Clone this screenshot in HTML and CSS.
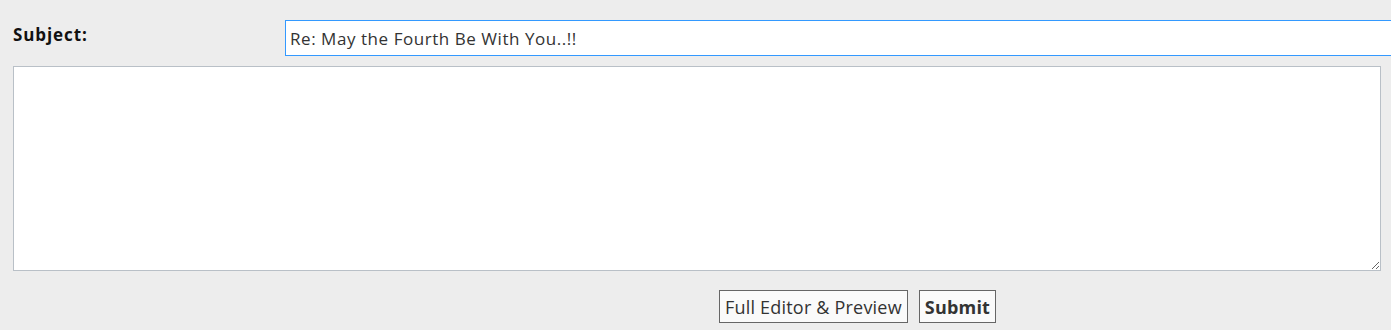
FILE: index.html
```html
<!DOCTYPE html>
<html lang="en">
<head>
    <meta charset="UTF-8">
    <title>Quick Reply</title>
    <link rel="stylesheet" href="styles.css">
</head>
<body>
    <form class="reply-form" autocomplete="off">
        <div class="subject-row">
            <label for="subject" class="subject-label">Subject:</label>
            <div class="field-col">
                <input type="text" id="subject" class="subject-input" value="Re: May the Fourth Be With You..!!">
            </div>
        </div>
        <textarea class="message-box" id="message"></textarea>
        <div class="button-row">
            <div class="spacer"></div>
            <div class="field-col buttons">
                <button type="button" class="btn">Full Editor &amp; Preview</button>
                <button type="submit" class="btn btn-submit">Submit</button>
            </div>
        </div>
    </form>
</body>
</html>
```

FILE: styles.css
```css
html, body {
    margin: 0;
    padding: 0;
    background: #ededed;
    overflow: hidden;
}

body {
    font-family: "Open Sans", Arial, sans-serif;
    color: #333;
}

.reply-form {
    padding: 20px 0 0 13px;
}

.subject-row {
    display: flex;
    align-items: flex-start;
}

.subject-label {
    width: 272px;
    flex: none;
    font-weight: bold;
    font-size: 17px;
    letter-spacing: 0.9px;
    color: #111;
    padding-top: 3px;
}

.field-col {
    flex: 1;
}

.subject-input {
    box-sizing: border-box;
    width: 100%;
    height: 36px;
    margin: 0;
    padding: 0 4px;
    border: 1px solid #3399ff;
    border-right: none;
    background: white;
    font-family: inherit;
    font-size: 17px;
    letter-spacing: 0.55px;
    color: #333;
    outline: none;
}

.message-box {
    display: block;
    box-sizing: border-box;
    width: 1368px;
    height: 205px;
    margin: 10px 0 0;
    border: 1px solid #b9c0c7;
    background: white;
    resize: vertical;
}

.button-row {
    display: flex;
    margin-top: 19px;
}

.spacer {
    width: 272px;
    flex: none;
}

.buttons {
    display: flex;
    gap: 11px;
    padding-left: 434px;
}

.btn {
    box-sizing: border-box;
    height: 33px;
    padding: 0 5px;
    border: 1px solid #666;
    background: #fafafa;
    font-family: inherit;
    font-size: 18px;
    letter-spacing: 0.2px;
    color: #333;
    cursor: pointer;
}

.btn-submit {
    font-weight: bold;
}
```
